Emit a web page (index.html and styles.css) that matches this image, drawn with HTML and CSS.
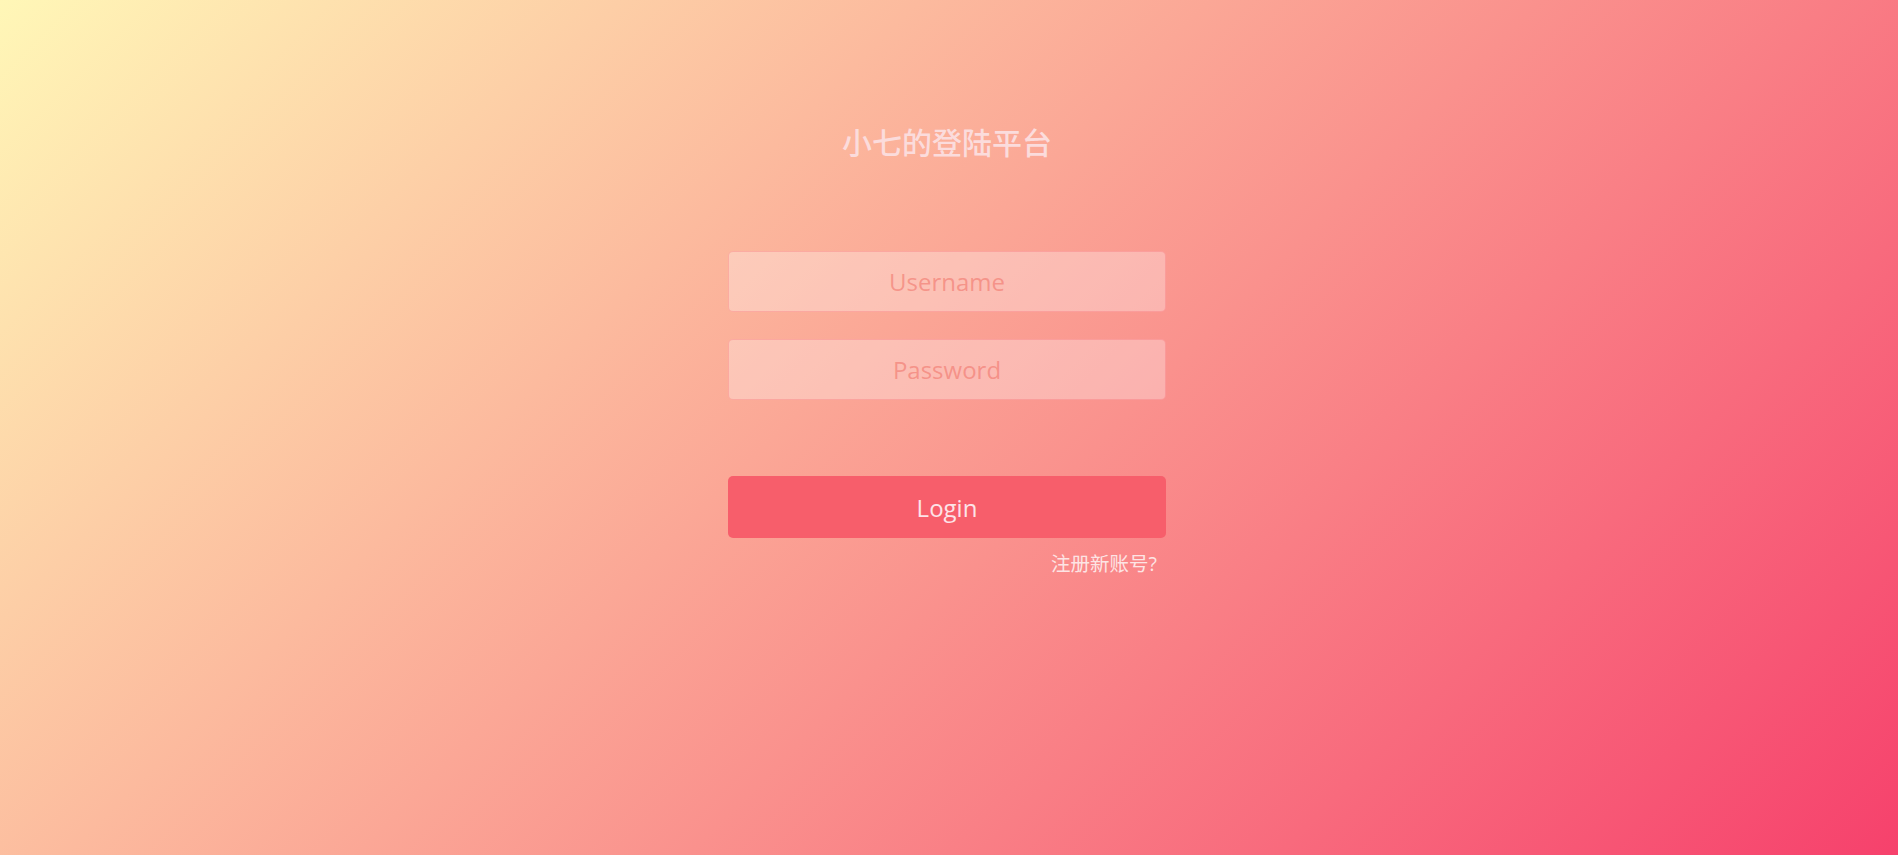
FILE: index.html
```html
<!DOCTYPE html>
<html lang="zh">
<head>
<meta charset="utf-8">
<title>小七的登陆平台</title>
<link rel="stylesheet" href="styles.css">
</head>
<body>
<div class="page">
  <div class="container">
    <h1 class="title">小七的登陆平台</h1>
    <form class="form">
      <input class="field" type="text" placeholder="Username">
      <input class="field" type="password" placeholder="Password">
      <button class="login" type="button">Login</button>
      <div class="register-row"><a class="register" href="#">注册新账号?</a></div>
    </form>
  </div>
</div>
</body>
</html>
```

FILE: styles.css
```css
html, body {
  margin: 0;
  padding: 0;
  height: 100%;
}
body {
  font-family: "Open Sans", "Noto Sans CJK SC", sans-serif;
  background: linear-gradient(135deg, #fff7b7 0%, #f6416c 100%);
  overflow: hidden;
}
.page {
  height: 100vh;
  display: flex;
  justify-content: center;
}
.container {
  width: 438px;
  padding-top: 123px;
  display: flex;
  flex-direction: column;
  align-items: center;
  transform: translateX(-2px);
}
.title {
  margin: 0;
  font-size: 30px;
  line-height: 40px;
  font-weight: 500;
  color: #fbdcdc;
  font-family: "Open Sans", "Noto Sans CJK SC", sans-serif;
}
.form {
  margin-top: 88px;
  width: 438px;
  display: flex;
  flex-direction: column;
}
.field {
  box-sizing: border-box;
  width: 100%;
  height: 61px;
  margin: 0 0 27px 0;
  padding: 0 15px;
  border: 1px solid rgba(246, 80, 90, 0.25);
  border-radius: 5px;
  background: rgba(255, 255, 255, 0.3);
  text-align: center;
  font-family: "Open Sans", "Noto Sans CJK SC", sans-serif;
  font-size: 24px;
  font-weight: 400;
  color: #fff;
  outline: none;
}
.field::placeholder {
  color: rgba(240, 110, 100, 0.55);
}
.field + .field {
  margin-bottom: 0;
}
.login {
  margin-top: 76px;
  height: 62px;
  width: 100%;
  border: 0;
  border-radius: 5px;
  background: #f75e6b;
  color: #fde3e8;
  font-family: "Open Sans", "Noto Sans CJK SC", sans-serif;
  font-size: 24px;
  font-weight: 400;
  cursor: pointer;
}
.register-row {
  display: flex;
  justify-content: flex-end;
  margin-top: 14px;
  padding-right: 9px;
}
.register {
  font-size: 19.5px;
  line-height: 24px;
  color: #fde4e4;
  text-decoration: none;
  font-family: "Open Sans", "Noto Sans CJK SC", sans-serif;
}
```
